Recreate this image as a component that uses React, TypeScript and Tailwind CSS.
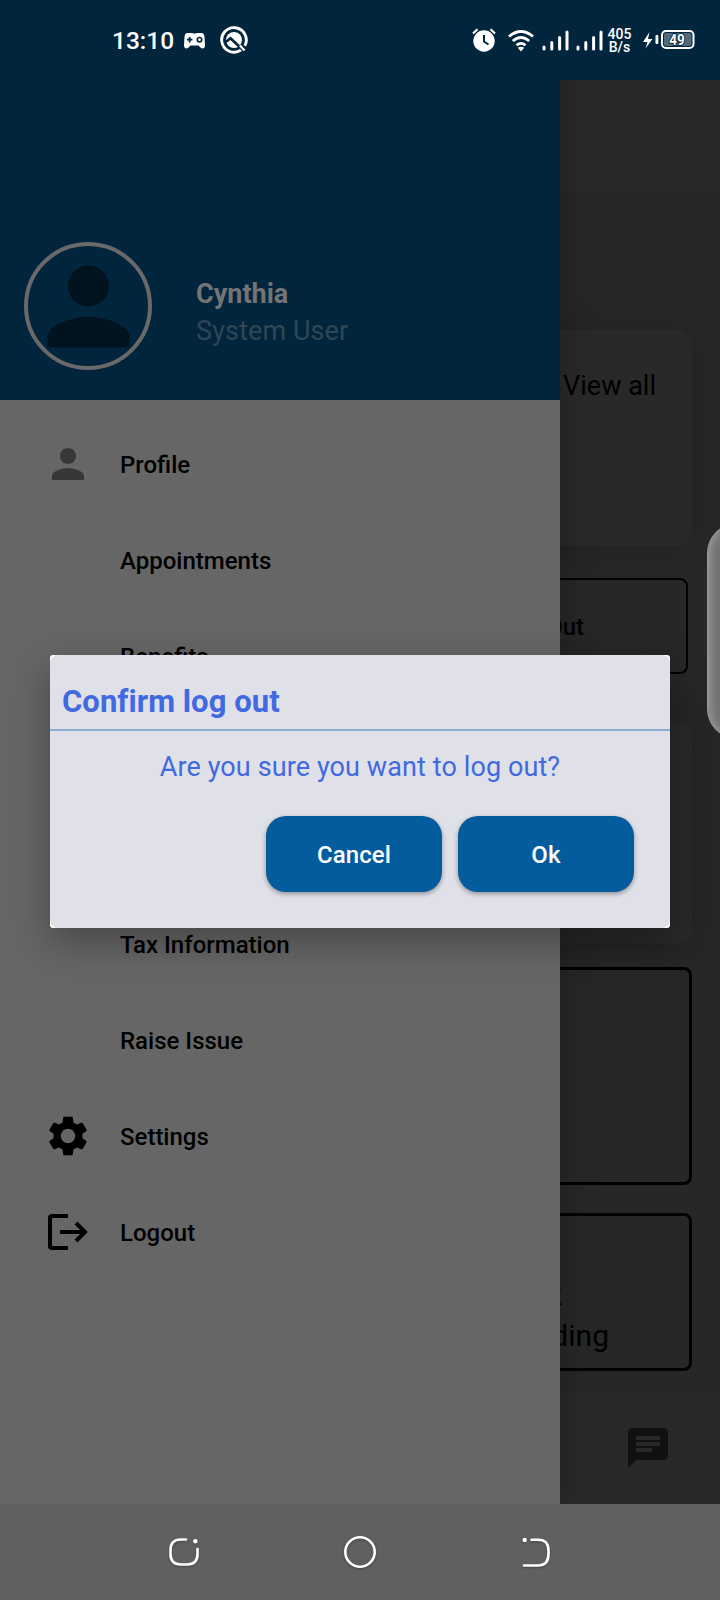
import React from "react";
import { MdSettings, MdChat } from "react-icons/md";

const person = "M12 12c2.21 0 4-1.79 4-4s-1.79-4-4-4-4 1.79-4 4 1.79 4 4 4zm0 2c-2.67 0-8 1.34-8 4v2h16v-2c0-2.66-5.33-4-8-4z";

function Signal() {
  return (
    <svg width="27" height="22" viewBox="0 0 27 22" stroke="#fff" strokeWidth="3" strokeLinecap="round">
      <path d="M2 17v2M9.8 12.5V19M17.6 7.5V19M25 2V19" />
    </svg>
  );
}

function StatusBar() {
  return (
    <header className="relative z-10 flex h-20 items-center bg-[#00253d] pl-[112px] text-white">
      <span className="w-[66px] pt-[2px] text-[24.500px] font-medium leading-none">13:10</span>
      <svg className="ml-[6px] mt-[1px]" width="21" height="16" viewBox="0 0 21 16">
        <path fill="#fff" d="M3.500 0H8Q10.500 1 13 0H17.500Q20 0 20.500 4L21 12.500Q21 15.500 18.500 15.500Q17 15.500 14.500 12.500H6.500Q4 15.500 2.500 15.500Q0 15.500 0 12.500L.500 4Q1 0 3.500 0Z" />
        <path d="M5.700 4v5.400M3 6.700h5.400" stroke="#00253d" strokeWidth="1.700" />
        <circle cx="15.500" cy="6.700" r="2.200" fill="none" stroke="#00253d" strokeWidth="1.600" />
      </svg>
      <svg className="ml-[15px]" width="28" height="28" viewBox="0 0 28 28">
        <path d="M21.200 23.900A12.300 12.300 0 1 1 24.800 19.800" fill="none" stroke="#fff" strokeWidth="2.900" />
        <circle cx="14" cy="14" r="8" fill="#fff" />
        <path d="M5.500 16.200L10.500 12.200 24 25" fill="none" stroke="#00253d" strokeWidth="2.700" />
        <path d="M20 19.500L24.500 24.500" stroke="#fff" strokeWidth="2.300" />
      </svg>
      <svg className="ml-[224px]" width="24" height="24" viewBox="0 0 24 24">
        <circle cx="12" cy="13" r="10.700" fill="#fff" />
        <path d="M1 5.500L5.500 1.200M23 5.500L18.500 1.200" stroke="#fff" strokeWidth="2.200" />
        <path d="M12 7v6.500l4.500 3" fill="none" stroke="#00253d" strokeWidth="2" />
      </svg>
      <svg className="ml-[12px] mt-[1px]" width="26" height="22" viewBox="0 0 26 22" fill="none" stroke="#fff" strokeWidth="2.800">
        <path d="M1 6.500Q13-3.500 25 6.500M4.800 11Q13 4 21.200 11M8.500 15.300Q13 11.500 17.500 15.300" />
        <path d="M9.800 17.700Q13 15.800 16.200 17.700L13 21.500Z" fill="#fff" stroke="none" />
      </svg>
      <div className="ml-[8px] mt-[1px] flex gap-[7px]"><Signal /><Signal /></div>
      <div className="ml-[4px] mt-[1px] w-[25px] text-center text-[14px] font-medium leading-[13px]">405<br />B/s</div>
      <svg className="ml-[10px]" width="54" height="20" viewBox="0 0 54 20">
        <path d="M7.500 2L1 12h4.500L3.500 18.500 10.500 9H6Z" fill="#fff" />
        <rect x="13.500" y="5" width="2.800" height="9" rx="1" fill="#fff" />
        <rect x="20" y="1" width="31.500" height="17" rx="4" fill="none" stroke="#fff" strokeWidth="2" />
        <rect x="22" y="3" width="27.500" height="13" rx="2" fill="#526b7b" />
        <text x="35" y="15" textAnchor="middle" textLength="15.500" lengthAdjust="spacingAndGlyphs" fill="#fff" stroke="#00253d" strokeWidth="2" paintOrder="stroke" fontFamily="Roboto" fontSize="15.500" fontWeight="700">49</text>
      </svg>
    </header>
  );
}

function Dashboard() {
  return (
    <main className="flex h-[1424px] flex-col bg-[#292929] text-black">
      <div className="h-[112px]" />
      <section className="flex flex-1 flex-col items-start bg-[#272727] pt-[138px]">
        <div className="flex h-[216px] w-[692px] justify-end rounded-2xl bg-[#292929] pr-[36px] pt-[36px] text-[27px] leading-[40px] shadow-[0_2px_36px_rgba(0,0,0,0.14)]">
          View all
        </div>
        <div className="mt-8 flex h-24 w-[688px] items-center justify-end rounded-lg border-2 border-black pr-[102px] pt-[2px] text-2xl font-medium">
          Out
        </div>
        <div className="mt-12 h-[221px] w-[692px] rounded-xl bg-[#292929] shadow-[0_2px_36px_rgba(0,0,0,0.14)]" />
        <div className="mt-6 h-[218px] w-[692px] rounded-lg border-[3px] border-black" />
        <div className="mt-7 flex h-[158px] w-[692px] flex-col rounded-lg border-[3px] border-black pt-[58px] text-[30px] leading-[41px]">
          <span className="w-[559px] text-right">k</span>
          <span className="w-[606px] text-right">ding</span>
        </div>
      </section>
      <footer className="flex h-[112px] items-center justify-end bg-[#292929] pr-[48px]">
        <MdChat size={48} color="#111111" />
      </footer>
    </main>
  );
}

const items = ["Profile", "Appointments", "Benefits", "", "", "Tax Information", "Raise Issue", "Settings", "Logout"];

function ItemIcon({ name }: { name: string }) {
  if (name === "Profile")
    return <svg width="48" height="48" viewBox="0 0 24 24" fill="#373737"><path d={person} /></svg>;
  if (name === "Settings") return <MdSettings size={48} color="#000" />;
  if (name === "Logout")
    return (
      <svg width="48" height="48" viewBox="0 0 48 48" fill="none" stroke="#000" strokeWidth="4">
        <path d="M24 8H8Q6 8 6 10V38Q6 40 8 40H24M16 24H41M32 15L41 24L32 33" />
      </svg>
    );
  return null;
}

function Drawer() {
  return (
    <aside className="absolute left-0 top-0 flex h-[1504px] w-[560px] flex-col bg-[#666666] shadow-[0_0_32px_rgba(0,0,0,0.25)]">
      <div className="flex h-[400px] items-start bg-[#00253d] pl-6 pt-[242px]">
        <div className="flex size-32 items-center justify-center rounded-full border-4 border-[#696969]">
          <svg className="shrink-0" width="123" height="123" viewBox="0 0 24 24" fill="#00131f"><path d={person} /></svg>
        </div>
        <div className="ml-11 pt-[34px] text-[27px] leading-[37px]">
          <div className="font-bold text-[#747474]">Cynthia</div>
          <div className="tracking-[0.1px] text-[#304654]">System User</div>
        </div>
      </div>
      <nav className="pt-4">
        {items.map((name, i) => (
          <div key={i} className="flex h-24 items-center">
            <div className="ml-11 flex w-12 justify-center"><ItemIcon name={name} /></div>
            <span className="ml-7 pt-[2px] text-2xl font-medium text-black">{name}</span>
          </div>
        ))}
      </nav>
    </aside>
  );
}

function Dialog() {
  return (
    <div className="absolute left-[50px] top-[655px] h-[273px] w-[620px] rounded-[3px] bg-white shadow-[0_14px_40px_rgba(0,0,0,0.32)]">
      <div className="flex h-full flex-col rounded-lg bg-[#e0e0e9]">
        <h2 className="h-[76px] border-b-2 border-[#8aaed0] pl-3 pt-[26px] text-[31px] font-bold leading-[42px] tracking-[0.06px] text-[#4169e1]">Confirm log out</h2>
        <p className="pt-[17px] text-center text-[27px] leading-[38px] tracking-[0.1px] text-[#4169e1]">Are you sure you want to log out?</p>
        <div className="mt-[30px] flex justify-end gap-4 pr-9">
          {["Cancel", "Ok"].map((label) => (
            <button key={label} className="h-[76px] w-44 rounded-[20px] bg-[#045c9c] pt-[2px] text-2xl font-medium tracking-[0.1px] text-white shadow-[0_2px_5px_rgba(0,0,0,0.35)]">{label}</button>
          ))}
        </div>
      </div>
    </div>
  );
}

function NavigationBar() {
  return (
    <footer className="relative flex h-24 items-center bg-[#606060]">
      <svg className="drop-shadow-[0_1px_1px_rgba(0,0,0,0.3)]" width="720" height="96" fill="none" stroke="#fff" strokeWidth="2.600" strokeLinecap="round">
        <path d="M186 35.500H181Q170.500 35.500 170.500 46V50Q170.500 60.500 181 60.500H187Q197.500 60.500 197.500 50V45" />
        <circle cx="195.300" cy="37.200" r="2.200" fill="#fff" stroke="none" />
        <circle cx="360" cy="48" r="14.700" />
        <path d="M531.500 35.800H538Q548.500 35.800 548.500 46.500V50Q548.500 61.500 538 61.500H524" />
        <circle cx="524.700" cy="36" r="2.200" fill="#fff" stroke="none" />
      </svg>
    </footer>
  );
}

export default function App() {
  return (
    <div className="relative h-[1600px] w-[720px] overflow-hidden bg-[#292929] font-[Roboto,sans-serif]">
      <StatusBar />
      <Dashboard />
      <Drawer />
      <NavigationBar />
      <Dialog />
      <div className="absolute left-[707px] top-[523px] h-[216px] w-16 rounded-[30px] border border-[#999999] bg-[#737373] shadow-[inset_3px_0_7px_rgba(255,255,255,0.25)]" />
    </div>
  );
}
